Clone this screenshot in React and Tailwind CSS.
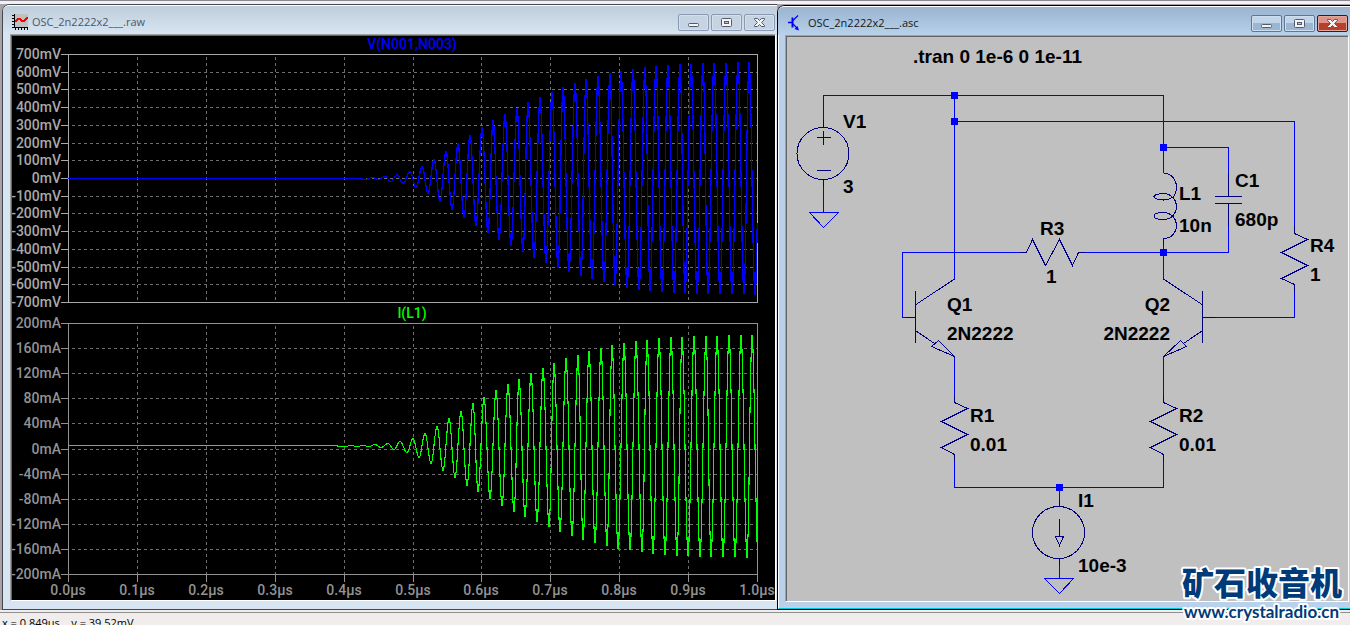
import React from "react";
import clsx from "clsx";

// [x, y] turning points of each trace, the curve swings between them
const VOLTAGE = [
  [68, 178], [358, 178], [366, 179], [372, 177], [378, 179], [385, 176], [391, 181], [397, 174], [403, 183],
  [410, 171], [416, 187], [422, 166], [428, 193], [434, 159], [440, 201], [446, 151], [452, 209],
  [458, 143], [464, 217], [470, 135], [476, 225], [482, 127], [488, 232], [493, 120], [499, 239],
  [505, 114], [511, 245], [517, 108], [523, 251], [528, 102], [534, 257], [540, 97], [546, 262],
  [552, 92], [558, 267], [563, 87], [569, 271], [575, 83], [581, 275], [586, 79], [592, 278],
  [598, 76], [604, 281], [610, 73], [615, 284], [621, 71], [627, 287], [633, 69], [639, 289],
  [645, 67], [650, 290], [656, 66], [662, 291], [668, 65], [674, 292], [680, 64], [685, 292],
  [691, 64], [697, 293], [703, 63], [708, 293], [714, 63], [720, 293], [726, 63], [732, 293],
  [738, 62], [744, 293], [749, 62], [755, 294], [761, 62],
];

const CURRENT = [
  [68, 445], [330, 445], [345, 446], [351, 445], [357, 446], [363, 445], [369, 446], [375, 444], [381, 447],
  [388, 443], [394, 449], [400, 441], [407, 452], [413, 438], [419, 457], [425, 433], [431, 463],
  [437, 426], [443, 470], [449, 418], [455, 477], [461, 411], [467, 485], [473, 403], [478, 491],
  [484, 397], [490, 498], [496, 390], [502, 505], [508, 384], [514, 511], [519, 379], [525, 516],
  [531, 373], [537, 521], [543, 368], [549, 526], [554, 363], [560, 531], [566, 358], [572, 535],
  [578, 355], [583, 539], [589, 351], [595, 542], [601, 348], [607, 545], [612, 345], [618, 548],
  [624, 343], [630, 549], [636, 341], [642, 551], [647, 340], [653, 553], [659, 338], [665, 554],
  [671, 337], [677, 555], [682, 337], [688, 555], [694, 336], [700, 556], [706, 336], [711, 556],
  [717, 336], [723, 556], [729, 335], [735, 556], [741, 335], [747, 557], [752, 335], [758, 557],
];

const tracePath = (points) => {
  const out = [`M${points[0][0]} ${points[0][1] + 0.5}`];
  for (let i = 1; i < points.length; i++) {
    const [x0, y0] = points[i - 1];
    const [x1, y1] = points[i];
    for (let s = 1; s <= 8; s++) {
      const t = s / 8;
      const x = x0 + (x1 - x0) * t;
      if (x > 757.5) break;
      const y = y0 + ((y1 - y0) * (1 - Math.cos(Math.PI * t))) / 2;
      out.push(`L${x.toFixed(1)} ${(y + 0.5).toFixed(1)}`);
    }
  }
  return out.join("");
};

const MV_LABELS = Array.from({ length: 15 }, (_, i) => `${700 - i * 100}mV`);
const MA_LABELS = Array.from({ length: 11 }, (_, i) => `${200 - i * 40}mA`);
const TIMES = Array.from({ length: 11 }, (_, i) => `${(i / 10).toFixed(1)}µs`);

const LEFT = 68;
const RIGHT = 757;

const Pane = ({ top, bottom, labels, color }) => {
  const step = (bottom - top) / (labels.length - 1);
  return (
    <g>
      <g stroke="#6e6e6e" strokeDasharray="3 3">
        {labels.slice(1, -1).map((label, i) => {
          const y = Math.round(top + step * (i + 1)) + 0.5;
          return <line key={label} x1={LEFT + 4} x2={RIGHT} y1={y} y2={y} />;
        })}
        {TIMES.slice(1, -1).map((t, i) => {
          const x = Math.round(LEFT + 68.9 * (i + 1)) + 0.5;
          return <line key={t} x1={x} x2={x} y1={top + 3} y2={bottom} />;
        })}
      </g>
      <rect x={LEFT + 0.5} y={top + 0.5} width={RIGHT - LEFT} height={bottom - top} fill="none" stroke={color} />
      {labels.map((label, i) => {
        const y = Math.round(top + step * i);
        return (
          <g key={label}>
            <line x1="61" x2={LEFT} y1={y + 0.5} y2={y + 0.5} stroke={color} />
            <text x="61" y={y + 5} textAnchor="end" fill={color}>
              {label}
            </text>
          </g>
        );
      })}
    </g>
  );
};

const WaveformPlot = () => (
  <svg
    viewBox="12 36 763 564"
    className="block h-full w-full bg-black font-['Roboto',sans-serif] text-[14px] font-medium"
    shapeRendering="crispEdges"
    role="img"
    aria-label="Waveforms"
  >
    <Pane top={54} bottom={302} labels={MV_LABELS} color="#a9a9a9" />
    <Pane top={323} bottom={574} labels={MA_LABELS} color="#929292" />
    {TIMES.map((t, i) => {
      const x = Math.round(LEFT + 68.9 * i);
      return (
        <g key={t}>
          <line x1={x + 0.5} x2={x + 0.5} y1="574" y2="582" stroke="#929292" />
          <text x={x} y="595" textAnchor="middle" fill="#929292">
            {t}
          </text>
        </g>
      );
    })}
    <text x="412" y="49" textAnchor="middle" fill="#0000ff">V(N001,N003)</text>
    <text x="412" y="318" textAnchor="middle" fill="#00ff00">I(L1)</text>
    <path d={tracePath(VOLTAGE)} fill="none" stroke="#0000ff" strokeWidth="1.3" />
    <path d={tracePath(CURRENT)} fill="none" stroke="#00ff00" strokeWidth="1.1" />
  </svg>
);

const WIRES = [
  "M823.5 120V95.5H1163.5V173",
  "M954.5 95V279",
  "M954.5 121.5H1294.5V226",
  "M1163.5 147.5H1228.5V174",
  "M1228.5 226V252.5H1085",
  "M1163.5 245V279",
  "M1020 252.5H902.5V317.5H906",
  "M1294.5 291V317.5H1215",
  "M954.5 356V396",
  "M1163.5 356V396",
  "M954.5 461V487.5H1163.5V461",
  "M1059.5 487V500",
  "M823.5 187V212.5M809.5 212.5H838.5L823.5 227.5Z",
  "M1059.5 565V578.5M1044.5 578.5H1073.5L1059.5 593.5Z",
];

const SYMBOLS = [
  // V1
  "M823.5 120V127M823.5 180V187M817 137.5H831M823.5 131V145M817 170.5H831",
  // I1
  "M1059.5 500V506M1059.5 559V565M1059.5 519V536M1055.5 536.5H1063.5L1059.5 545.5Z",
  // R3
  "M1020 252.5H1026.5L1032.5 239.5L1045.5 265.5L1059.5 239.5L1072.5 265.5L1078.5 252.5H1085",
  // R4
  "M1294.5 226V233.5L1307.5 239.5L1281.5 252.5L1307.5 265.5L1281.5 278.5L1294.5 284.5V291",
  // R1, R2
  "M954.5 396V402.5L967.5 408.5L941.5 421.5L967.5 434.5L941.5 447.5L954.5 454.5V461",
  "M1163.5 396V402.5L1176.5 408.5L1150.5 421.5L1176.5 434.5L1150.5 447.5L1163.5 454.5V461",
  // C1
  "M1228.5 174V196M1215 196.5H1242M1215 203.5H1242M1228.5 204V226",
  // L1
  "M1163.5 173C1172 173 1176.5 181 1176.5 187C1176.5 195 1172 200 1163.5 200C1158 200 1154 198 1154 196.5C1154 195 1158 193.5 1163.5 193.5C1172 193.5 1176.5 201 1176.5 206C1176.5 213 1172 219.5 1163.5 219.5C1158 219.5 1154 218 1154 216C1154 214 1158 212.5 1163.5 212.5C1172 212.5 1176.5 220 1176.5 225C1176.5 232 1172 238.5 1163.5 238.5V245",
  // Q1, Q2
  "M906 317.5H915.5M915.5 291V343M954.5 279L916 304.5M916 331L934.5 343.5M938.5 340.5L931.5 346.5L954.5 356.5Z",
  "M1215 317.5H1202.5M1202.5 291V343M1163.5 279L1202 304.5M1202 331L1183.5 343.5M1180.5 340.5L1186.5 346.5L1163.5 356.5Z",
];

const NODES = [[954, 95], [954, 121], [1163, 147], [1163, 252], [1059, 487]];

const LABELS = [
  [913, 63, ".tran 0 1e-6 0 1e-11"],
  [843, 128, "V1"],
  [843, 193, "3"],
  [1179, 200, "L1"],
  [1179, 232, "10n"],
  [1235, 187, "C1"],
  [1235, 226, "680p"],
  [1040, 235, "R3"],
  [1046, 283, "1"],
  [1310, 252, "R4"],
  [1310, 281, "1"],
  [947, 311, "Q1"],
  [947, 340, "2N2222"],
  [970, 422, "R1"],
  [970, 451, "0.01"],
  [1179, 422, "R2"],
  [1179, 451, "0.01"],
  [1078, 507, "I1"],
  [1078, 572, "10e-3"],
];

const Schematic = () => (
  <svg
    viewBox="787 37 561 564"
    className="block h-full w-full bg-[#c0c0c0] font-['Liberation_Sans',Arial,sans-serif] text-[19px] font-bold"
    role="img"
    aria-label="Schematic"
  >
    <g fill="none" shapeRendering="crispEdges">
      <g stroke="#0000ff">
        {WIRES.map((d) => <path key={d} d={d} />)}
      </g>
      <g stroke="#000080">
        {SYMBOLS.map((d) => <path key={d} d={d} />)}
        <circle cx="823" cy="153.5" r="26" />
        <circle cx="1058.5" cy="532.5" r="26" />
      </g>
    </g>
    {NODES.map(([x, y]) => (
      <rect key={`${x}-${y}`} x={x - 3} y={y - 3} width="7" height="7" fill="#0000ff" />
    ))}
    {LABELS.map(([x, y, text]) => (
      <text key={`${x}-${y}`} x={x} y={y}>{text}</text>
    ))}
    <text x="1170" y="311" textAnchor="end">Q2</text>
    <text x="1170" y="340" textAnchor="end">2N2222</text>
  </svg>
);

const PlotIcon = () => (
  <svg width="16" height="16" viewBox="0 0 16 16" shapeRendering="crispEdges" aria-hidden="true">
    <rect x="2" width="14" height="14" fill="#c0c0c0" />
    <path d="M2.5 0V14M2 13.5H16M0 1.5H2M0 4.5H2M0 7.5H2M0 10.5H2M0 13.5H2M3.5 14V16M6.5 14V16M9.5 14V16M12.5 14V16M15.5 14V16" stroke="#000" />
    <path d="M3 8L6 5H8L10 7H12L15.5 3.5" fill="none" stroke="#f00" strokeWidth="1.5" />
  </svg>
);

const TransistorIcon = () => (
  <svg width="16" height="16" viewBox="0 0 16 16" aria-hidden="true">
    <path d="M0 7.5H4" stroke="#00f" strokeWidth="1.5" />
    <path d="M4.5 2.5V12.5" stroke="#00f" strokeWidth="2" />
    <path d="M5 5.5L10 0.5M5 9L9 13" stroke="#00f" strokeWidth="1.2" />
    <path d="M11 15.5L6.5 14L9.5 11Z" fill="#00f" />
  </svg>
);

const GLYPHS = {
  Minimize: <rect x="10.5" y="9.5" width="10" height="3" rx="1" />,
  Maximize: (
    <>
      <rect x="10.5" y="4.5" width="10" height="8" rx="1" />
      <rect x="13.5" y="7.5" width="4" height="2" fill="#b5c6dc" />
    </>
  ),
  Close: <path d="M10.5 4.5H13.5L15.5 6.5L17.5 4.5H20.5V5.5L17.5 8.5L20.5 11.5V12.5H17.5L15.5 10.5L13.5 12.5H10.5V11.5L13.5 8.5L10.5 5.5Z" />,
};

const WindowButton = ({ name, active }) => (
  <button
    type="button"
    aria-label={name}
    className={clsx(
      "h-[17px] w-[31px] rounded-[2px] border",
      !active && "border-[#8a99b3] bg-[#c6d3e2] shadow-[inset_0_0_0_1px_#d5e0ec]",
      active && name !== "Close" &&
        "border-[#5f7796] bg-linear-to-b from-[#c0d4ea] from-50% to-[#9bb6d3] to-50% shadow-[inset_0_0_0_1px_#cfdff0]",
      active && name === "Close" &&
        "border-[#43141a] bg-linear-to-b from-[#dd9487] from-50% to-[#b8402a] to-50% shadow-[inset_0_0_0_1px_#e2a79c]"
    )}
  >
    <svg
      viewBox="0 0 31 17"
      className="-m-px block h-[17px] w-[31px]"
      fill="#f4f4f4"
      stroke="#535a6c"
      aria-hidden="true"
    >
      {GLYPHS[name]}
    </svg>
  </button>
);

const TitleBar = ({ icon, title, active }) => (
  <header
    className={clsx(
      "flex h-[29px] shrink-0 items-center rounded-tl-md border-t border-white bg-linear-to-b pt-1 pr-[2px]",
      active ? "from-[#99b4d1] to-[#b9d1ea] pl-[10px]" : "from-[#bfcddb] to-[#d7e4f2] pl-[9px]"
    )}
  >
    {icon}
    <h2
      className={clsx(
        "ml-1 flex-1 truncate font-['Open_Sans',sans-serif] text-[11px] leading-4",
        active ? "text-[#101820]" : "text-[#4c5866]"
      )}
    >
      {title}
    </h2>
    <div className="flex gap-[2px]">
      <WindowButton name="Minimize" active={active} />
      <WindowButton name="Maximize" active={active} />
      <WindowButton name="Close" active={active} />
    </div>
  </header>
);

const ClientArea = ({ children }) => (
  <div className="min-h-0 flex-1 border border-t-[#a0a0a0] border-r-white border-b-white border-l-[#a0a0a0]">
    <div className="h-full border-t border-l border-[#646464]">{children}</div>
  </div>
);

const Watermark = () => (
  <svg
    viewBox="0 0 166 64"
    className="absolute right-[4px] bottom-0 h-16 w-[166px] overflow-visible"
    fill="#003a78"
    stroke="#fff"
    strokeWidth="4"
    strokeLinejoin="round"
    paintOrder="stroke"
  >
    <text x="2" y="34" className="font-['Noto_Sans_CJK_SC',sans-serif] text-[32px] font-black">
      矿石收音机
    </text>
    <text x="4" y="57" className="font-['Lato',sans-serif] text-[17px] font-bold">
      www.crystalradio.cn
    </text>
  </svg>
);

const App = () => {
  return (
    <div className="relative flex h-screen flex-col overflow-hidden bg-[#f0edec]">
      <div className="h-1 shrink-0 border-t border-[#8c8893] bg-[#f3f0f1]" />
      <main className="grid min-h-0 flex-1 grid-cols-[775fr_573fr] grid-rows-[minmax(0,1fr)] bg-[#a6a3a8] pl-[2px]">
        <section className="flex min-h-0 flex-col rounded-tl-lg border-t border-b border-l border-[#45474c] bg-[#d7e4f2]">
          <TitleBar icon={<PlotIcon />} title="OSC_2n2222x2___.raw" />
          <div className="flex min-h-0 flex-1 flex-col pr-px pb-2 pl-[7px]">
            <ClientArea>
              <WaveformPlot />
            </ClientArea>
          </div>
        </section>
        <section className="mt-px flex min-h-0 flex-col rounded-tl-lg border-t border-b border-l border-black bg-[#b9d1ea]">
          <TitleBar icon={<TransistorIcon />} title="OSC_2n2222x2___.asc" active />
          <div className="flex min-h-0 flex-1 flex-col border-b border-l border-b-[#00c8d8] border-l-white pr-px pb-[6px] pl-[6px]">
            <ClientArea>
              <Schematic />
            </ClientArea>
          </div>
        </section>
      </main>
      <footer className="mt-[2px] h-[13px] shrink-0 overflow-hidden border-t border-[#8f8f8f] pt-[2px] pl-[2px] font-['Open_Sans',sans-serif] text-[11px] leading-4 whitespace-pre text-black">
        x = 0.849µs    y = 39.52mV
      </footer>
      <Watermark />
    </div>
  );
};

export default App;
